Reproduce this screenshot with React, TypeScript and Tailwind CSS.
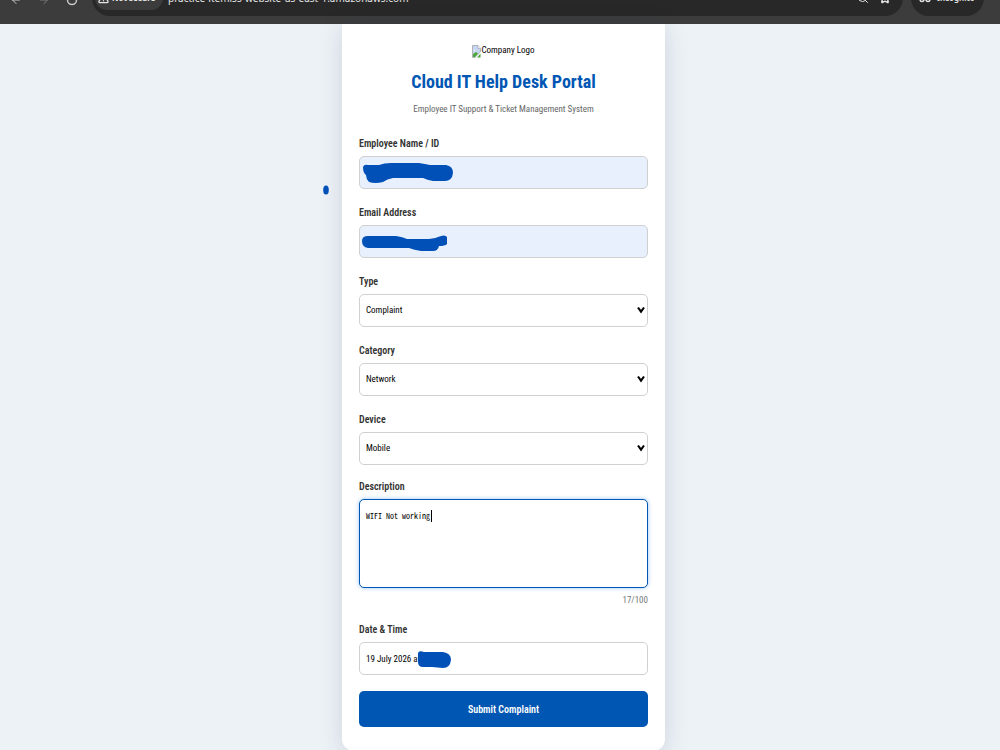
import React, { useState } from "react";
import { ArrowLeft, ArrowRight, RotateCw, Star, TriangleAlert, Glasses, Search } from "lucide-react";

const label = "block text-[10px] leading-4 font-semibold text-[#333]";
const field =
  "block h-[33px] w-full rounded-[5px] border border-[#d0d0d0] px-[6px] text-[9px] text-black outline-none";

function BrowserBar() {
  return (
    <header className="flex h-6 items-end overflow-hidden bg-[#3c3c3c] pr-4 font-['Noto_Sans',sans-serif] text-[10px] text-[#e3e3e3]">
      <nav className="flex w-[92px] shrink-0 items-center gap-4 pb-[18px] pl-[10px] text-[#c7c7c7]">
        <button type="button" aria-label="Back"><ArrowLeft className="size-3" /></button>
        <button type="button" aria-label="Forward" className="text-[#7d7d7d]"><ArrowRight className="size-3" /></button>
        <button type="button" aria-label="Reload"><RotateCw className="size-3" strokeWidth={3} /></button>
      </nav>
      <div className="mb-2 flex h-9 min-w-0 flex-1 items-center rounded-[18px] bg-[#282828] pr-3 pl-[3px]">
        <span className="flex h-6 w-[68px] shrink-0 items-center gap-[3px] rounded-xl bg-[#3c3c3c] pl-[3px] text-[8px] font-bold whitespace-nowrap">
          <TriangleAlert className="size-[11px] shrink-0" strokeWidth={3} />
          Not secure
        </span>
        <span className="flex-1 pl-[5px] leading-5 whitespace-nowrap">practice-itemiss-website-us-east-1.amazonaws.com</span>
        <Search className="mr-[10px] size-3" />
        <Star className="size-3" strokeWidth={3} />
      </div>
      <div className="mb-2 ml-2 flex h-9 w-[73px] items-center gap-[6px] rounded-[18px] bg-[#282828] pl-2 text-[8px] font-semibold">
        <Glasses className="size-3" strokeWidth={3} />
        Incognito
      </div>
    </header>
  );
}

function Scribble({ d, className }: { d: string; className: string }) {
  return (
    <svg aria-hidden="true" viewBox="0 0 100 34" className={`pointer-events-none absolute h-[34px] w-[100px] ${className}`}>
      <path d={d} fill="#0050b8" />
    </svg>
  );
}

function SelectField({ id, text, options }: { id: string; text: string; options: string[] }) {
  return (
    <div className="flex flex-col gap-1">
      <label htmlFor={id} className={label}>{text}</label>
      <div className="relative">
        <select id={id} className={`${field} appearance-none bg-white`}>
          {options.map((o) => <option key={o}>{o}</option>)}
        </select>
        <svg aria-hidden="true" viewBox="0 0 8 8" className="pointer-events-none absolute top-3 right-[3px] size-2">
          <path d="M1 1.500 4 5.600 7 1.500" fill="none" stroke="#000" strokeWidth="2.100" />
        </svg>
      </div>
    </div>
  );
}

function BrokenImage() {
  return (
    <svg aria-hidden="true" viewBox="0 0 9 13" className="h-[13px] w-[9px]">
      <path d="M.5.5h5.500l2.500 3v3L3 12.500H.5z" fill="#c6d6f2" stroke="#a3a3a3" strokeWidth=".8" />
      <path d="M6 .5v3h2.500" fill="#fff" stroke="#a3a3a3" strokeWidth=".7" />
      <path d="M1.500 5.500q1-2 2 0z" fill="#fff" />
      <path d="M1 12V9l3-2 2 1.500L3 12zM5 12.500l3.500-4v4z" fill="#4ca83d" />
    </svg>
  );
}

export default function App() {
  const [note, setNote] = useState("WIFI Not working");
  return (
    <div className="min-h-screen overflow-x-hidden bg-[#edf2f6] font-['Roboto_Condensed','Liberation_Sans',sans-serif]">
      <BrowserBar />
      <main className="flex justify-center pl-[7px]">
        <section className="w-full max-w-[323px] rounded-b-xl bg-white px-[17px] pt-[18px] pb-6 shadow-[0_4px_24px_rgba(30,50,80,0.15)]">
          <div className="flex flex-col items-center">
            <div className="flex h-[18px] items-center text-[9px] text-black">
              <BrokenImage />
              Company Logo
            </div>
            <h1 className="mt-2 text-[18px] leading-7 font-bold whitespace-nowrap text-[#0056b3]">Cloud IT Help Desk Portal</h1>
            <p className="mt-1 text-[9px] leading-[18px] whitespace-nowrap text-[#666]">Employee IT Support &amp; Ticket Management System</p>
          </div>
          <form className="mt-[18px] flex flex-col gap-4" onSubmit={(e) => e.preventDefault()}>
            <div className="flex flex-col gap-1">
              <label htmlFor="employee" className={label}>Employee Name / ID</label>
              <div className="relative">
                <input id="employee" type="text" className={`${field} bg-[#e8f0fe]`} />
                <Scribble className="top-0 left-0" d="M4 11Q5 8 9 9L20 9Q25 7 32 7H60Q66 8 71 9H87Q94 10 94 17Q93 25 86 25H74Q68 24 64 22H34Q28 23 24 26Q16 28 10 26Q7 23 7 19Q4 17 4 11Z" />
                <svg aria-hidden="true" viewBox="0 0 6 10" className="pointer-events-none absolute top-[29px] left-[-36px] h-[10px] w-[6px]">
                  <ellipse cx="3" cy="5" rx="2.800" ry="4.500" fill="#0050b8" />
                </svg>
              </div>
            </div>
            <div className="flex flex-col gap-1">
              <label htmlFor="email" className={label}>Email Address</label>
              <div className="relative">
                <input id="email" type="email" className={`${field} bg-[#e8f0fe]`} />
                <Scribble className="top-0 left-0" d="M3 16Q3 11 9 11H37Q44 12 48 14H66Q74 14 79 12Q86 9 88 12V19Q86 21 80 21Q79 26 74 26H62Q55 25 50 23H9Q3 22 3 16Z" />
              </div>
            </div>
            <SelectField id="type" text="Type" options={["Complaint", "Request"]} />
            <SelectField id="category" text="Category" options={["Network", "Hardware", "Software"]} />
            <SelectField id="device" text="Device" options={["Mobile", "Laptop", "Desktop"]} />
            <div className="-mt-0.5 flex flex-col gap-1">
              <label htmlFor="description" className={label}>Description</label>
              <div className="relative">
                <textarea
                  id="description"
                  maxLength={100}
                  value={note}
                  onChange={(e) => setNote(e.target.value)}
                  className="block h-[89px] w-full resize-none rounded-[5px] border border-[#0056b3] bg-white px-[6px] py-2 font-['Noto_Sans_Mono_CJK_SC','Liberation_Mono',monospace] text-[8px] leading-4 text-black shadow-[0_0_4px_rgba(0,110,230,0.4)] outline-none"
                />
                <span aria-hidden="true" className="pointer-events-none absolute top-[11px] left-[72px] h-3 w-px bg-black" />
              </div>
              <span className="text-right text-[9px] leading-4 text-[#777]">17/100</span>
            </div>
            <div className="-mt-0.5 flex flex-col gap-1">
              <label htmlFor="date" className={label}>Date &amp; Time</label>
              <div className="relative">
                <input id="date" type="text" readOnly value="19 July 2026 at" className={`${field} bg-white`} />
                <Scribble className="top-0 left-[53px]" d="M6 12Q6 8 12 10H31Q39 11 39 18Q38 26 31 26L20 25H11Q6 25 6 20Z" />
              </div>
            </div>
            <button type="submit" className="h-9 w-full rounded-[5px] bg-[#0056b3] text-[10px] font-semibold text-white">Submit Complaint</button>
          </form>
        </section>
      </main>
    </div>
  );
}
